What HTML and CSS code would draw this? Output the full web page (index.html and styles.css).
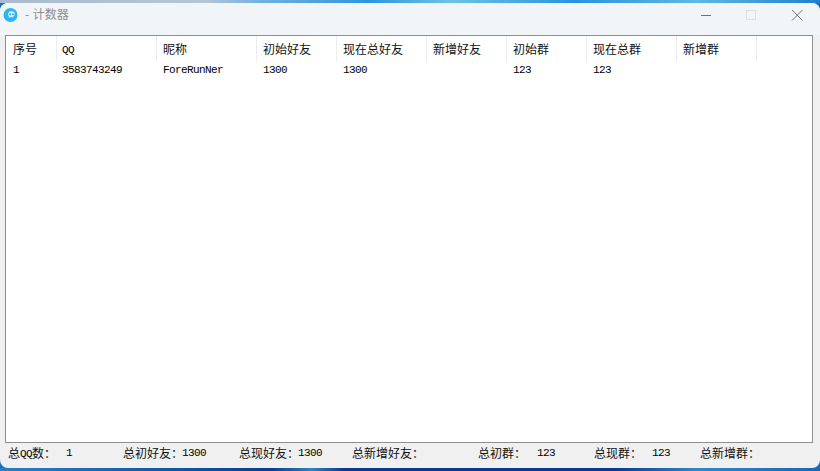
FILE: index.html
```html
<!DOCTYPE html>
<html lang="zh-CN">
<head>
<meta charset="utf-8">
<title>计数器</title>
<link rel="stylesheet" href="styles.css">
</head>
<body>
<div class="window">
  <header class="titlebar">
    <svg class="app-icon" width="16" height="16" viewBox="0 0 16 16">
      <circle cx="7.5" cy="8" r="7" fill="#2db4f2"/>
      <path d="M2.5 13 L5 10 L7 12.5 Z" fill="#2db4f2"/>
      <path d="M5 6.6a3.4 3 0 1 1 2 3.4l-1.4.9.3-1.6a3 3 0 0 1-.9-2.7z" fill="#d3f0fd"/>
      <circle cx="7" cy="7.2" r="1" fill="#2db4f2"/>
      <circle cx="10" cy="7.2" r="1" fill="#2db4f2"/>
    </svg>
    <span class="title">- 计数器</span>
    <div class="controls">
      <svg class="ctl" width="46" height="12" viewBox="0 0 46 12"><path d="M19 6.5H29" stroke="#707070"/></svg>
      <svg class="ctl" width="46" height="12" viewBox="0 0 46 12"><rect x="18.5" y="1.5" width="9" height="9" fill="none" stroke="#dedede"/></svg>
      <svg class="ctl" width="46" height="12" viewBox="0 0 46 12"><path d="M18 1L28.5 11.5M28.5 1L18 11.5" stroke="#707070"/></svg>
    </div>
  </header>
  <main class="table">
    <div class="row head">
      <div class="c first">序号</div>
      <div class="c w100 qq"><span class="lat raised">QQ</span></div>
      <div class="c w100">昵称</div>
      <div class="c w80">初始好友</div>
      <div class="c w90">现在总好友</div>
      <div class="c w80">新增好友</div>
      <div class="c w80">初始群</div>
      <div class="c w90">现在总群</div>
      <div class="c w80">新增群</div>
    </div>
    <div class="row data">
      <div class="c first">1</div>
      <div class="c w100 qq">3583743249</div>
      <div class="c w100">ForeRunNer</div>
      <div class="c w80">1300</div>
      <div class="c w90">1300</div>
      <div class="c w80"></div>
      <div class="c w80">123</div>
      <div class="c w90">123</div>
      <div class="c w80"></div>
    </div>
  </main>
  <footer class="status">
    <span>总<span class="lat raised">QQ</span>数：</span><span class="lat">1</span>
    <span>总初好友：</span><span class="lat">1300</span>
    <span>总现好友：</span><span class="lat">1300</span>
    <span>总新增好友：</span><span></span>
    <span>总初群：</span><span class="lat">123</span>
    <span>总现群：</span><span class="lat">123</span>
    <span>总新增群：</span><span></span>
  </footer>
</div>
</body>
</html>
```
FILE: styles.css
```css
* { box-sizing: border-box; }
html, body { margin: 0; height: 100%; }
body {
  width: 820px;
  height: 471px;
  overflow: hidden;
  padding: 3px 0;
  background:
    linear-gradient(90deg, #a9bccd 0%, #b4c6d6 25%, #6fb0df 32%, #2f95e2 45%, #6cc3e4 55%, #2a92e0 70%, #5fb8e6 85%, #1f7fd0 100%) top / 100% 3px no-repeat,
    linear-gradient(90deg, #2a7fc4 0%, #0f5aa8 20%, #0b3c90 33%, #2d83bd 38%, #0b3a8c 42%, #0a3a8e 75%, #2f86c8 85%, #1668b8 100%) bottom / 100% 3px no-repeat,
    #1a6fc0;
  font-family: "Noto Sans CJK SC", sans-serif;
  font-size: 12px;
  color: #111;
}
.window {
  height: 465px;
  border-radius: 8px;
  background: #f0f0f0;
  overflow: hidden;
  display: flex;
  flex-direction: column;
}
.titlebar {
  height: 32px;
  flex: none;
  display: flex;
  align-items: flex-start;
  padding: 4px 0 0 3px;
  background: #f2f5f8;
}
.app-icon { flex: none; margin-right: 6px; }
.title { color: #8c8c8c; line-height: 14px; word-spacing: 1px; }
.controls { margin-left: auto; display: flex; padding-top: 2px; }
.ctl { display: block; }
.table {
  height: 408px;
  flex: none;
  margin-left: 5px;
  width: 808px;
  background: #fff;
  border: 1px solid #8e8e8e;
}
.row { display: flex; }
.head { height: 25px; align-items: stretch; }
.head .c { border-right: 1px solid #ececec; line-height: 26px; }
.data { height: 18px; padding-top: 1px; font-family: "Liberation Mono", monospace; font-size: 11px; letter-spacing: -0.6px; line-height: 16px; color: #000; }
.c { padding-left: 6px; flex: none; }
.first { width: 51px; padding-left: 7px; }
.qq { padding-left: 5px; }
.w80 { width: 80px; }
.w90 { width: 90px; }
.w100 { width: 100px; }
.lat { font-family: "Liberation Mono", monospace; font-size: 11px; letter-spacing: -0.6px; color: #000; }
.raised { vertical-align: 1px; }
.status {
  flex: 1;
  display: grid;
  grid-template-columns: 58px 57px 59px 57px 59px 54px 72px 54px 59px 57px 58px 48px 60px 1fr;
  align-items: center;
  padding: 0 0 6px 8px;
  white-space: nowrap;
}
```
